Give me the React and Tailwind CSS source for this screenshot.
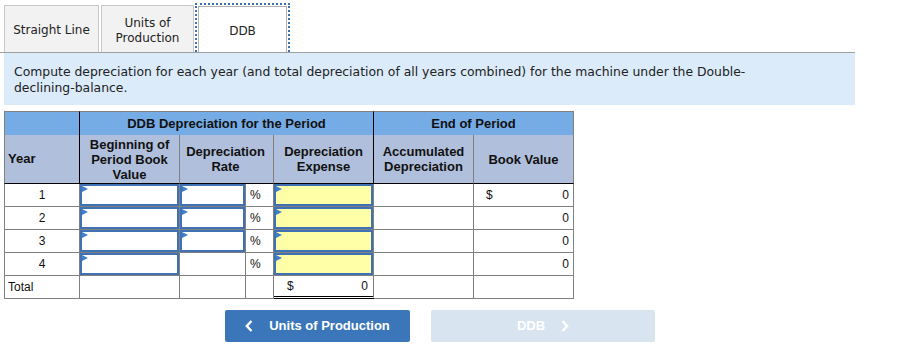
import React from "react";

const G = "border-[#808080]";

function Tri() {
  return (
    <svg className="absolute left-0 top-0" width="6" height="7" viewBox="0 0 6 7">
      <polygon points="0,0 6,3 0,6" fill="#3f7fcc" />
    </svg>
  );
}

function Input({ yellow }) {
  return (
    <div
      className={`relative h-full w-full border-2 border-[#3e72b4] ${
        yellow ? "bg-[#ffffa8]" : "bg-white"
      }`}
    >
      <Tri />
    </div>
  );
}

export default function App() {
  const rows = [1, 2, 3, 4];
  return (
    <div className="w-[903px] h-[364px] bg-white text-[#222]">
      {/* Tabs */}
      <div
        className="w-[855px] flex items-end gap-[2px] pl-[4px] pt-[3px] border-b border-[#a0a0a0]"
        style={{ fontFamily: '"DejaVu Sans", Verdana, sans-serif' }}
      >
        <div className="w-[95px] h-[47px] pt-[2px] flex items-center justify-center bg-[#f2f2f2] border border-b-0 border-[#c8c8c8] text-[12px] leading-[15px]">
          Straight Line
        </div>
        <div className="w-[93px] h-[47px] pt-[3px] flex items-center justify-center text-center bg-[#f2f2f2] border border-b-0 border-[#c8c8c8] text-[12px] leading-[15px]">
          Units of
          <br />
          Production
        </div>
        <div className="ml-[-1px] w-[95px] h-[49px] border-2 border-b-0 border-dotted border-[#3a70b5] p-[1px] pb-0">
          <div className="h-full pt-[2px] flex items-center justify-center bg-white border border-b-0 border-[#b0b0b0] text-[12px]">
            DDB
          </div>
        </div>
      </div>

      {/* Instruction */}
      <div
        className="ml-[4px] w-[851px] h-[52px] bg-[#dbebf9] px-[10px] pt-[11px] text-[12.4px] leading-[16px] whitespace-nowrap"
        style={{ fontFamily: '"DejaVu Sans", Verdana, sans-serif' }}
      >
        Compute depreciation for each year (and total depreciation of all years combined) for the machine under the Double-
        <br />
        declining-balance.
      </div>

      {/* Table */}
      <div
        className="ml-[4px] mt-[6px] grid grid-cols-[76px_100px_66px_28px_100px_100px_100px] grid-rows-[24px_49px_23px_23px_23px_23px_23px] text-[12px] text-[#111]"
        style={{ fontFamily: '"Liberation Sans", Arial, sans-serif' }}
      >
        {/* Header row 1 */}
        <div className="bg-[#76ace6] border-t border-l border-r border-t-[#808080] border-l-[#808080] border-r-black" />
        <div className="col-span-4 bg-[#76ace6] border-t border-r border-t-[#808080] border-r-black flex items-center justify-center text-[13px] font-bold">
          DDB Depreciation for the Period
        </div>
        <div className={`col-span-2 bg-[#76ace6] border-t border-r ${G} flex items-center justify-center text-[13px] font-bold`}>
          End of Period
        </div>

        {/* Header row 2 */}
        <div className="bg-[#b0bfdb] border-l border-r border-b border-l-[#808080] border-r-black border-b-black flex items-center pl-[3px] text-[13px] font-bold">
          Year
        </div>
        <div className="bg-[#b0bfdb] border-r border-b border-r-[#808080] border-b-black flex items-center justify-center text-center text-[13px] font-bold leading-[15px]">
          Beginning of
          <br />
          Period Book
          <br />
          Value
        </div>
        <div className="col-span-2 bg-[#b0bfdb] border-r border-b border-r-[#808080] border-b-black flex items-center justify-center text-center text-[13px] font-bold leading-[15px] pr-[2px]">
          Depreciation
          <br />
          Rate
        </div>
        <div className="bg-[#b0bfdb] border-r border-b border-r-black border-b-black flex items-center justify-center text-center text-[13px] font-bold leading-[15px]">
          Depreciation
          <br />
          Expense
        </div>
        <div className="bg-[#b0bfdb] border-r border-b border-r-[#808080] border-b-black flex items-center justify-center text-center text-[13px] font-bold leading-[15px]">
          Accumulated
          <br />
          Depreciation
        </div>
        <div className="bg-[#b0bfdb] border-r border-b border-r-[#808080] border-b-black flex items-center justify-center text-center text-[13px] font-bold leading-[15px]">
          Book Value
        </div>

        {/* Data rows */}
        {rows.map((r) => (
          <React.Fragment key={r}>
            <div className={`border-l border-r border-b ${G} flex items-center justify-center`}>{r}</div>
            <div className={`border-r border-b ${G}`}>
              <Input />
            </div>
            <div className={`border-r border-b ${G}`}>{r <= 3 ? <Input /> : null}</div>
            <div className={`border-r border-b ${G} flex items-center pl-[4px]`}>%</div>
            <div className={`border-r border-b ${G}`}>
              <Input yellow />
            </div>
            <div className={`border-r border-b ${G}`} />
            <div className={`border-r border-b ${G} flex items-center justify-between pl-[12px] pr-[4px]`}>
              <span>{r === 1 ? "$" : ""}</span>
              <span>0</span>
            </div>
          </React.Fragment>
        ))}

        {/* Total row */}
        <div className={`border-l border-r border-b ${G} flex items-center pl-[3px]`}>Total</div>
        <div className={`border-r border-b ${G}`} />
        <div className={`border-r border-b ${G}`} />
        <div className={`border-r border-b ${G}`} />
        <div className="border-r border-r-[#808080] border-b-[3px] border-double border-b-black flex items-center justify-between pl-[13px] pr-[5px]">
          <span>$</span>
          <span>0</span>
        </div>
        <div className={`border-r border-b ${G}`} />
        <div className={`border-r border-b ${G}`} />
      </div>

      {/* Buttons */}
      <div
        className="flex mt-[11px] pl-[225px] gap-[21px] text-[13px] font-bold text-white"
        style={{ fontFamily: '"Liberation Sans", Arial, sans-serif' }}
      >
        <div className="w-[185px] h-[32px] rounded-[2px] bg-[#3a76b9] flex items-center justify-center gap-[16px]">
          <svg width="8" height="12" viewBox="0 0 8 12">
            <polyline points="6.5,1 1.8,6 6.5,11" fill="none" stroke="white" strokeWidth="2.4" />
          </svg>
          <span>Units of Production</span>
        </div>
        <div className="w-[224px] h-[32px] rounded-[2px] bg-[#d9e4f1] flex items-center justify-center gap-[16px]">
          <span>DDB</span>
          <svg width="8" height="12" viewBox="0 0 8 12">
            <polyline points="1.5,1 6.2,6 1.5,11" fill="none" stroke="white" strokeWidth="2.4" />
          </svg>
        </div>
      </div>
    </div>
  );
}
